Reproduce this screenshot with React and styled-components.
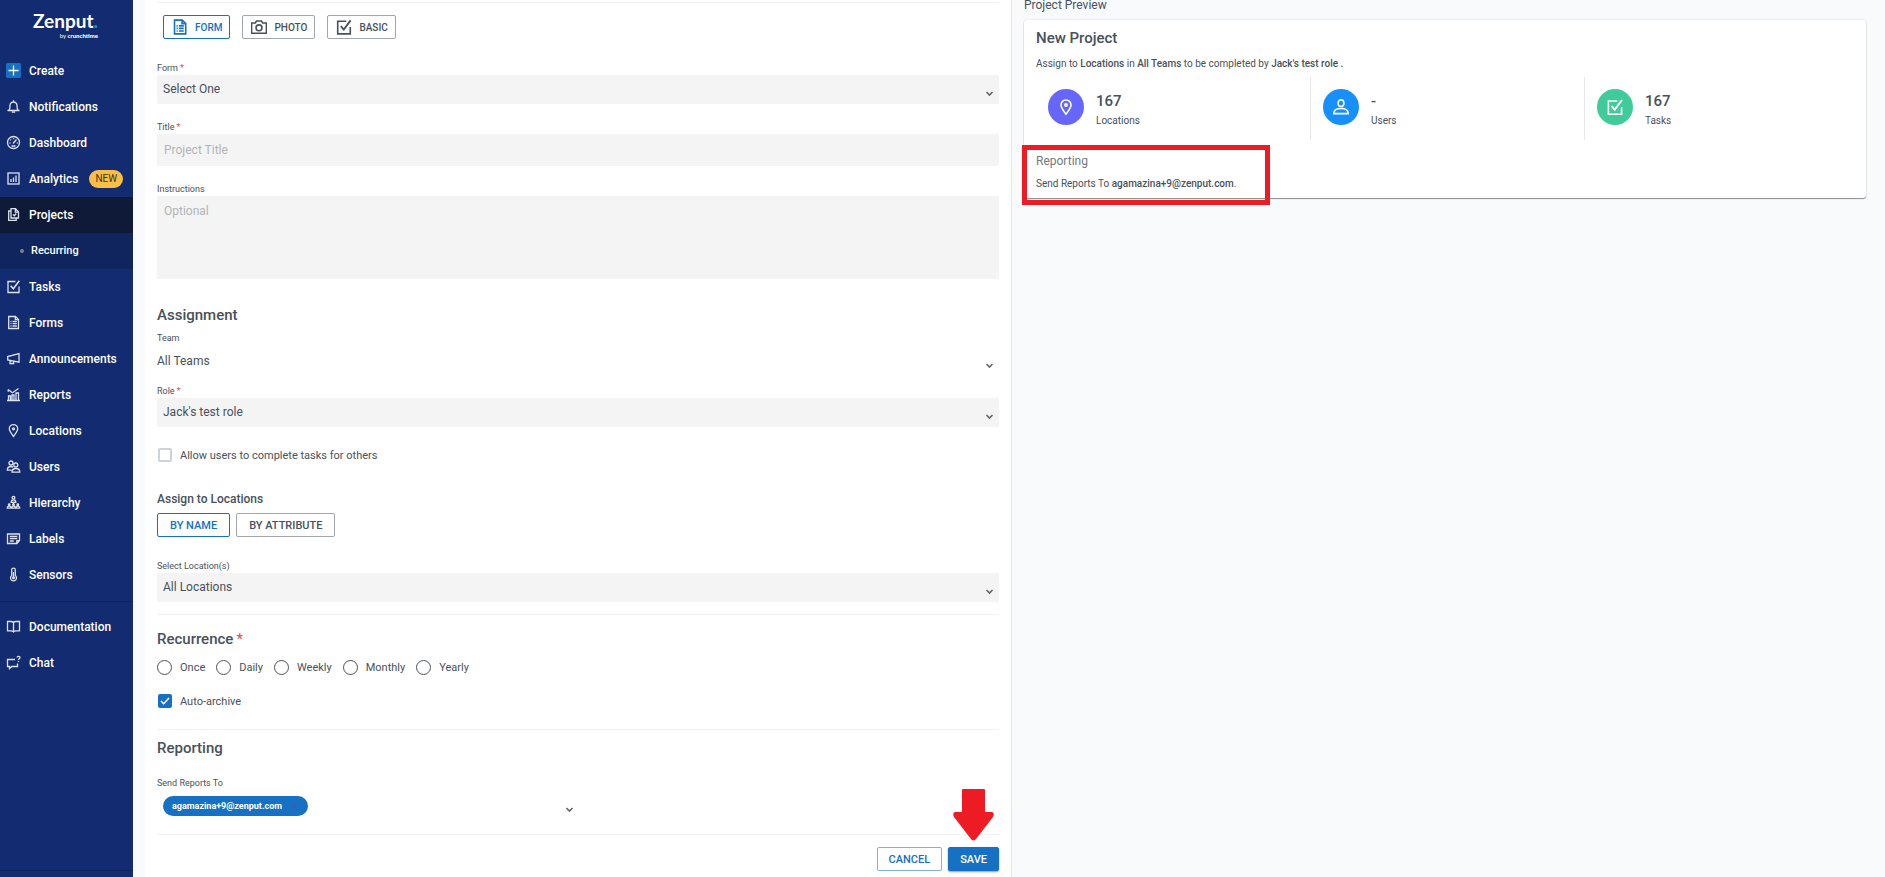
import styled, { createGlobalStyle } from "styled-components";

const GlobalStyle = createGlobalStyle`
  * {
    box-sizing: border-box;
  }
  body {
    margin: 0;
    background: #f9fafc;
    color: #47515c;
    font-family: Roboto, "Liberation Sans", sans-serif;
    font-size: 12px;
  }
  button, input, select, textarea {
    font-family: inherit;
    color: inherit;
  }
`;

const Layout = styled.div`
  display: flex;
  min-height: 100vh;
`;

/* Sidebar */

const Sidebar = styled.nav`
  display: flex;
  flex-direction: column;
  flex: 0 0 133px;
  background: #132b70;
  color: #fff;
`;

const Logo = styled.div`
  display: flex;
  flex-direction: column;
  align-items: flex-end;
  height: 53px;
  padding: 10px 35px 0 0;
`;

const LogoName = styled.span`
  font-family: Lato, sans-serif;
  font-size: 19px;
  font-weight: 700;
  line-height: 22px;

  i {
    color: #1f8fd6;
    font-style: normal;
  }
`;

const LogoTag = styled.span`
  font-family: Lato, sans-serif;
  font-size: 6px;
  line-height: 8px;

  b {
    font-weight: 900;
  }
`;

const NavLink = styled.a`
  display: flex;
  align-items: center;
  gap: 8px;
  height: 36px;
  padding: 0 0 1px 6px;
  background: ${({ $active }) => ($active ? "#0f1a38" : "transparent")};
  color: #fff;
  font-weight: 500;
  text-decoration: none;
`;

const SubLink = styled.a`
  display: flex;
  align-items: center;
  gap: 7px;
  height: 36px;
  padding: 0 0 1px 20px;
  background: #10245e;
  color: #fff;
  font-size: 11px;
  font-weight: 500;
  text-decoration: none;

  &::before {
    content: "";
    width: 4px;
    height: 4px;
    border-radius: 50%;
    background: #7d8088;
  }
`;

const NavIcon = styled.svg`
  flex: none;
  width: 15px;
  height: 15px;
  fill: none;
  stroke: #dde2ee;
  stroke-width: 1.3;
`;

const NewBadge = styled.span`
  margin-left: 3px;
  padding: 0 6px;
  border-radius: 9px;
  background: #f9be46;
  color: #3a3524;
  font-size: 10px;
  font-weight: 400;
  line-height: 18px;
`;

const NavDivider = styled.div`
  height: 1px;
  margin: 8px 0 7px;
  background: #10235a;
`;

const NavFooter = styled.div`
  height: 7px;
  margin-top: auto;
  border-top: 1px solid #10235a;
`;

/* Content */

const Content = styled.main`
  display: grid;
  grid-template-columns: 1fr 1fr;
  flex: 1;
  padding: 0 6px 0 12px;
`;

const FormPanel = styled.form`
  padding: 2px 12px 6px;
  border-right: 1px solid #e4e7eb;
  background: #fff;
`;

const Divider = styled.hr`
  height: 1px;
  margin: ${({ $top = 12 }) => $top}px 0 0;
  border: 0;
  background: #f1f2f3;
`;

const Row = styled.div`
  display: flex;
  align-items: center;
  gap: ${({ $gap = 12 }) => $gap}px;
  margin-top: ${({ $top = 12 }) => $top}px;
  padding-left: ${({ $indent = 0 }) => $indent}px;
`;

const OutlineButton = styled.button`
  display: flex;
  align-items: center;
  height: 24px;
  padding: 0 12px;
  border: 1px solid ${({ $selected }) => ($selected ? "#1670c4" : "#a1a6ae")};
  border-radius: 2px;
  background: #fff;
  color: ${({ $selected }) => ($selected ? "#1670c4" : "#47515c")};
  font-size: 11px;
  font-weight: 500;
`;

const TypeButton = styled(OutlineButton)`
  gap: 7px;
  padding: 0 7px 0 8px;
  font-size: 10px;
`;

const CancelButton = styled(OutlineButton)`
  padding: 0 11px;
  border-color: #7db1e0;
  color: #1670c4;
`;

const SaveButton = styled(OutlineButton)`
  padding: 0 11px;
  border-color: #1670c4;
  background: #1670c4;
  box-shadow: 0 1px 2px rgba(0, 0, 0, 0.4);
  color: #fff;
`;

const TypeIcon = styled.svg`
  width: 16px;
  height: 16px;
  fill: none;
  stroke: currentColor;
  stroke-width: 1.4;
`;

const Field = styled.div`
  display: flex;
  flex-direction: column;
  margin-top: ${({ $top = 17 }) => $top}px;
`;

const Label = styled.label`
  font-size: 9px;
  line-height: 13px;
`;

const Required = styled.span`
  margin-left: ${({ $gap = 2 }) => $gap}px;
  color: #f0454f;
  font-weight: 400;
`;

const SelectWrap = styled.div`
  position: relative;
  margin-top: ${({ $plain }) => ($plain ? 2 : 0)}px;
`;

const Select = styled.select`
  display: block;
  width: 100%;
  height: 29px;
  padding: 0 24px 1px ${({ $plain }) => ($plain ? 0 : 6)}px;
  border: 0;
  border-radius: 2px;
  background: ${({ $plain }) => ($plain ? "transparent" : "#f4f4f4")};
  font-size: 12px;
  appearance: none;
`;

const SelectArrow = styled.svg`
  position: absolute;
  right: 5px;
  bottom: 6px;
  width: 9px;
  height: 9px;
  fill: none;
  stroke: #62666b;
  stroke-width: 1.6;
  pointer-events: none;
`;

const TextInput = styled.input`
  height: 32px;
  padding: 0 7px;
  border: 0;
  border-radius: 2px;
  background: #f4f4f4;
  font-size: 12px;

  &::placeholder {
    color: #b1b4b8;
  }
`;

const TextArea = styled.textarea`
  height: 83px;
  padding: 8px 7px;
  border: 0;
  border-radius: 2px;
  background: #f4f4f4;
  font-size: 12px;
  resize: none;

  &::placeholder {
    color: #b1b4b8;
  }
`;

const Heading = styled.h2`
  margin: ${({ $top }) => $top}px 0 0;
  font-size: 15px;
  font-weight: 500;
  line-height: 20px;
`;

const SubHeading = styled.h3`
  margin: 28px 0 0;
  font-size: 12px;
  font-weight: 500;
  line-height: 16px;
`;

const Choice = styled.label`
  display: flex;
  align-items: center;
  gap: 8px;
  height: 16px;
  font-size: 11px;
`;

const Checkbox = styled.input`
  width: 14px;
  height: 14px;
  margin: 0 0 0 1px;
  border: 2px solid #cfd3d8;
  border-radius: 2px;
  background: #fff;
  appearance: none;

  &:checked {
    border-color: #1670c4;
    background: #1670c4;
  }
`;

const Tick = styled.svg`
  position: absolute;
  top: 2px;
  left: 3px;
  width: 10px;
  height: 10px;
  fill: none;
  stroke: #fff;
  stroke-width: 1.5;
  pointer-events: none;
`;

const CheckBoxWrap = styled.span`
  position: relative;
  display: flex;
`;

const Radio = styled.input`
  width: 15px;
  height: 15px;
  margin: 0;
  border: 1px solid #4f5357;
  border-radius: 50%;
  background: #fff;
  appearance: none;

  &:checked {
    border: 4px solid #1670c4;
  }
`;

const Recipients = styled.div`
  display: flex;
  align-items: center;
  justify-content: space-between;
  width: 50%;
  height: 32px;
  padding: 0 4px 0 6px;
`;

const Chip = styled.span`
  display: flex;
  align-items: center;
  height: 20px;
  padding: 0 9px;
  border-radius: 10px;
  background: #1670c4;
  color: #fff;
  font-size: 9px;
  font-weight: 700;
`;

const IconButton = styled.button`
  display: flex;
  padding: 0;
  border: 0;
  background: transparent;
  color: ${({ $color = "#62666b" }) => $color};
  margin: ${({ $margin = 0 }) => $margin};

  svg {
    width: 9px;
    height: 9px;
    fill: none;
    stroke: currentColor;
    stroke-width: ${({ $thin }) => ($thin ? 1 : 1.6)};
  }
`;

const Actions = styled.div`
  display: flex;
  justify-content: flex-end;
  gap: 6px;
  margin-top: 12px;
`;

const SaveWrap = styled.div`
  position: relative;
`;

const Pointer = styled.svg`
  position: absolute;
  bottom: 30px;
  left: 5px;
  width: 41px;
  height: 52px;
  fill: #ed1c24;
`;

/* Preview */

const Preview = styled.section`
  padding: 0 13px 0 12px;
`;

const PreviewTitle = styled.h2`
  margin: 0 0 10px;
  font-size: 12px;
  font-weight: 400;
  line-height: 10px;
`;

const Card = styled.article`
  padding: 8px 8px 7px 12px;
  border-radius: 3px;
  background: #fff;
  box-shadow: 0 1px 1px rgba(0, 0, 0, 0.42), 0 0 2px rgba(0, 0, 0, 0.15);
`;

const CardTitle = styled.h3`
  margin: 0;
  font-size: 15px;
  font-weight: 500;
  line-height: 20px;
`;

const Summary = styled.p`
  margin: ${({ $top }) => $top}px 0 0;
  font-size: 10px;
  line-height: 14px;

  b {
    font-weight: 500;
  }
`;

const Stats = styled.div`
  display: grid;
  grid-template-columns: repeat(3, 1fr);
  margin-top: 6px;
`;

const Stat = styled.div`
  display: flex;
  align-items: flex-start;
  gap: 12px;
  height: 63px;
  padding: 12px 12px 0;

  & + & {
    border-left: 1px solid #e6e7e9;
  }
`;

const StatCircle = styled.span`
  display: flex;
  align-items: center;
  justify-content: center;
  width: 36px;
  height: 36px;
  border-radius: 50%;
  background: ${({ $color }) => $color};

  svg {
    width: 18px;
    height: 18px;
    fill: none;
    stroke: #fff;
    stroke-width: 1.3;
  }
`;

const StatText = styled.div`
  display: flex;
  flex-direction: column;
  padding-top: 2px;
  font-size: 10px;
  line-height: 20px;

  strong {
    font-size: 15px;
    font-weight: 500;
  }
`;

const ReportNote = styled.div`
  position: relative;
  width: fit-content;
  margin-top: 13px;
`;

const NoteTitle = styled.h4`
  margin: 0;
  color: #75787c;
  font-size: 12px;
  font-weight: 400;
  line-height: 16px;
`;

const Highlight = styled.div`
  position: absolute;
  inset: -8px -34px -14px -14px;
  border: 5px solid #ed1c24;
  pointer-events: none;
`;

const icons = {
  create: (
    <>
      <rect width="15" height="15" rx="1.5" fill="#1670c4" stroke="none" />
      <path d="M7.5 2.5v10M2.5 7.5h10" stroke="#fff" />
    </>
  ),
  bell: (
    <path d="M1.5 11.500h12M3 11.300c1-1 1-2.300 1-4.800a3.500 3.500 0 0 1 7 0c0 2.500 0 3.800 1 4.800M5.800 13.200h3.400M7.500 3V1.300" />
  ),
  gauge: (
    <>
      <circle cx="7.5" cy="7.5" r="6" />
      <path d="M7 8.500l3.500-4M3.500 8h1M10.800 8h1M7.500 3.200v1M4.300 4.600l.8.8M5.500 11h4" />
    </>
  ),
  analytics: (
    <>
      <rect x="2" y="2" width="11" height="11" />
      <path d="M5 11V8M7.500 11V6.500M10 11V4.500" />
    </>
  ),
  projects: (
    <>
      <path d="M5 1.700h4.500L12.500 5v6H5zM9.300 2v3.200h3M4.800 4H2.700v9.300h7.500V11.500" />
      <path d="M7 7.500l1.300 1.300 2-2.300" />
    </>
  ),
  check: (
    <>
      <path d="M9.500 2.500H2v11h11V7.500" />
      <path d="M4.700 6.700l2.600 3 6-8" strokeWidth="1.6" />
    </>
  ),
  form: (
    <>
      <path d="M2.700 1.500h6.800l3 3v9H2.700zM9.300 1.700v3h3" />
      <path d="M4.500 6.500h1M6.500 6.500h4.300M4.500 8.700h1M6.500 8.700h4.300M4.500 11h1M6.500 11h4.300" />
    </>
  ),
  announce: (
    <path d="M1.700 5.500v3.400l11.300 2.300V2.700zM4 9.500v3h3.700v-2" />
  ),
  reports: (
    <path d="M1 13.500h13M2.500 13.300V9h2v4.300M6 13.300V8h2v5.300M10 13.300V6h2.500v7.300M2 2.500l4.500 3.200L12.500 1.500M2.200 4.700V2.500" />
  ),
  pin: (
    <>
      <path d="M7.500 13.500C5 10 3.300 8 3.300 5.800a4.200 4.200 0 0 1 8.400 0c0 2.200-1.700 4.200-4.200 7.700z" />
      <circle cx="7.500" cy="5.800" r="1" />
    </>
  ),
  users: (
    <>
      <circle cx="5" cy="4" r="2" />
      <circle cx="9.800" cy="6" r="2" />
      <path d="M6 13.200c0-2.500 1.500-3.700 3.900-3.700s3.900 1.200 3.900 3.700zM5.500 11.200H1.300c0-2.200 1.200-3.700 3.700-3.700 1 0 1.600.2 2.200.6" />
    </>
  ),
  hierarchy: (
    <>
      <circle cx="7.500" cy="2.700" r="1.400" />
      <path d="M5.200 7.300c0-1.700.8-2.500 2.300-2.500s2.300.8 2.300 2.500zM7.500 7.500v2" />
      <circle cx="3.200" cy="9.800" r="0.800" />
      <circle cx="7.500" cy="9.800" r="0.800" />
      <circle cx="11.800" cy="9.800" r="0.800" />
      <path d="M1.300 13.200c0-1.400.6-2 1.900-2s1.900.6 1.900 2zM5.600 13.200c0-1.400.6-2 1.900-2s1.900.6 1.900 2zM9.900 13.200c0-1.400.6-2 1.900-2s1.900.6 1.900 2z" />
    </>
  ),
  labels: (
    <path d="M1.500 3h12v6.500l-2.500 3H1.500zM3.800 5.500h7.500M3.800 7.700h7.500M3.800 10h4M10.800 12.300V9.700h2.500" />
  ),
  sensors: (
    <>
      <path d="M5.700 8.500V3a1.800 1.800 0 0 1 3.600 0v5.500a3 3 0 1 1-3.600 0z" />
      <path d="M7.500 5v5.500" />
      <circle cx="7.500" cy="10.800" r="0.900" />
    </>
  ),
  book: (
    <path d="M7.500 3.500C6.800 2.700 6 2.500 5 2.500H1.500v9.300H5c1.200 0 2 .2 2.500 1 .5-.8 1.300-1 2.500-1h3.500V2.500H10c-1 0-1.800.2-2.500 1zM7.500 3.500v9" />
  ),
  chat: (
    <>
      <path d="M9 4.500H1.500v7h2v2l2.300-2h5.700V8.500" />
      <path d="M11 2.500c.2-1.500 3-1.400 3 .2 0 1.200-1.500 1-1.500 2.300M12.500 6v1" />
    </>
  ),
  camera: (
    <>
      <path d="M1 4h3.300l1-1.800h4.400l1 1.800H14v9H1z" />
      <circle cx="7.500" cy="8.200" r="2.600" />
    </>
  ),
  person: (
    <>
      <ellipse cx="7.500" cy="4.300" rx="2.400" ry="2.800" />
      <path d="M1.500 13c0-3 2-4.300 6-4.300s6 1.300 6 4.300z" />
    </>
  ),
};

const Chevron = () => <path d="M1.500 3l3 3 3-3" />;

const navItems = [
  { label: "Create", icon: "create" },
  { label: "Notifications", icon: "bell" },
  { label: "Dashboard", icon: "gauge" },
  { label: "Analytics", icon: "analytics", badge: "NEW" },
  { label: "Projects", icon: "projects", active: true, child: "Recurring" },
  { label: "Tasks", icon: "check" },
  { label: "Forms", icon: "form" },
  { label: "Announcements", icon: "announce" },
  { label: "Reports", icon: "reports" },
  { label: "Locations", icon: "pin" },
  { label: "Users", icon: "users" },
  { label: "Hierarchy", icon: "hierarchy" },
  { label: "Labels", icon: "labels" },
  { label: "Sensors", icon: "sensors" },
];

const helpItems = [
  { label: "Documentation", icon: "book" },
  { label: "Chat", icon: "chat" },
];

const projectTypes = [
  { label: "FORM", icon: "form", selected: true },
  { label: "PHOTO", icon: "camera" },
  { label: "BASIC", icon: "check" },
];

const stats = [
  { value: "167", label: "Locations", icon: "pin", color: "#6667f9" },
  { value: "-", label: "Users", icon: "person", color: "#1890fb" },
  { value: "167", label: "Tasks", icon: "check", color: "#40cb9b" },
];

function NavItem({ label, icon, badge, active, child }) {
  return (
    <>
      <NavLink href="#" $active={active}>
        <NavIcon viewBox="0 0 15 15">{icons[icon]}</NavIcon>
        {label}
        {badge && <NewBadge>{badge}</NewBadge>}
      </NavLink>
      {child && <SubLink href="#">{child}</SubLink>}
    </>
  );
}

function SelectField({ id, label, value, required, plain, top }) {
  return (
    <Field $top={top}>
      <Label htmlFor={id}>
        {label}
        {required && <Required>*</Required>}
      </Label>
      <SelectWrap $plain={plain}>
        <Select id={id} $plain={plain}>
          <option>{value}</option>
        </Select>
        <SelectArrow viewBox="0 0 9 9">
          <Chevron />
        </SelectArrow>
      </SelectWrap>
    </Field>
  );
}

function ProjectForm() {
  return (
    <FormPanel onSubmit={(e) => e.preventDefault()}>
      <Divider $top={0} />
      <Row $indent={6}>
        {projectTypes.map(({ label, icon, selected }) => (
          <TypeButton key={label} type="button" $selected={selected}>
            <TypeIcon viewBox="0.5 0.5 14 14">{icons[icon]}</TypeIcon>
            {label}
          </TypeButton>
        ))}
      </Row>

      <SelectField id="form" label="Form" value="Select One" required top={23} />
      <Field>
        <Label htmlFor="title">
          Title<Required>*</Required>
        </Label>
        <TextInput id="title" placeholder="Project Title" />
      </Field>
      <Field>
        <Label htmlFor="instructions">Instructions</Label>
        <TextArea id="instructions" placeholder="Optional" />
      </Field>

      <Heading $top={26}>Assignment</Heading>
      <SelectField id="team" label="Team" value="All Teams" plain top={7} />
      <SelectField id="role" label="Role" value="Jack's test role" required top={9} />
      <Row $top={20}>
        <Choice>
          <Checkbox type="checkbox" />
          Allow users to complete tasks for others
        </Choice>
      </Row>

      <SubHeading>Assign to Locations</SubHeading>
      <Row $top={6} $gap={6}>
        <OutlineButton type="button" $selected>
          BY NAME
        </OutlineButton>
        <OutlineButton type="button">BY ATTRIBUTE</OutlineButton>
      </Row>
      <SelectField id="locations" label="Select Location(s)" value="All Locations" top={23} />

      <Divider />
      <Heading $top={14} id="recurrence">
        Recurrence<Required $gap={3}>*</Required>
      </Heading>
      <Row $top={10} $gap={11} role="radiogroup" aria-labelledby="recurrence">
        {["Once", "Daily", "Weekly", "Monthly", "Yearly"].map((name) => (
          <Choice key={name}>
            <Radio type="radio" name="recurrence" value={name} />
            {name}
          </Choice>
        ))}
      </Row>
      <Row $top={18}>
        <Choice>
          <CheckBoxWrap>
            <Checkbox type="checkbox" defaultChecked />
            <Tick viewBox="0 0 10 10">
              <path d="M1 5l2.700 2.700L9 2" />
            </Tick>
          </CheckBoxWrap>
          Auto-archive
        </Choice>
      </Row>

      <Divider $top={20} />
      <Heading $top={8}>Reporting</Heading>
      <Field $top={19}>
        <Label as="span">Send Reports To</Label>
        <Recipients>
          <Chip>
            agamazina+9@zenput.com
            <IconButton type="button" aria-label="Remove" $color="#2f62a0" $margin="0 0 0 8px" $thin>
              <svg viewBox="0 0 9 9">
                <path d="M2 2l5 5M7 2l-5 5" />
              </svg>
            </IconButton>
          </Chip>
          <IconButton type="button" aria-label="Choose recipients" $margin="6px 0 0">
            <svg viewBox="0 0 9 9">
              <Chevron />
            </svg>
          </IconButton>
        </Recipients>
      </Field>

      <Divider />
      <Actions>
        <CancelButton type="button">CANCEL</CancelButton>
        <SaveWrap>
          <SaveButton type="submit">SAVE</SaveButton>
          <Pointer viewBox="0 0 41 52">
            <path d="M10 0h21q1 0 1 1v22h7q3 1 1 5L23 50q-2.500 3-5 0L1 28q-2-4 1-5h7V1q0-1 1-1z" />
          </Pointer>
        </SaveWrap>
      </Actions>
    </FormPanel>
  );
}

function ProjectPreview() {
  return (
    <Preview>
      <PreviewTitle>Project Preview</PreviewTitle>
      <Card>
        <CardTitle>New Project</CardTitle>
        <Summary $top={9}>
          Assign to <b>Locations</b> in <b>All Teams</b> to be completed by{" "}
          <b>Jack's test role .</b>
        </Summary>
        <Stats>
          {stats.map(({ value, label, icon, color }) => (
            <Stat key={label}>
              <StatCircle $color={color}>
                <svg viewBox="0 0 15 15">{icons[icon]}</svg>
              </StatCircle>
              <StatText>
                <strong>{value}</strong>
                {label}
              </StatText>
            </Stat>
          ))}
        </Stats>
        <ReportNote>
          <NoteTitle>Reporting</NoteTitle>
          <Summary $top={8}>
            Send Reports To <b>agamazina+9@zenput.com</b>.
          </Summary>
          <Highlight />
        </ReportNote>
      </Card>
    </Preview>
  );
}

function App() {
  return (
    <>
      <GlobalStyle />
      <Layout>
        <Sidebar>
          <Logo>
            <LogoName>
              Zenput<i>.</i>
            </LogoName>
            <LogoTag>
              by <b>crunchtime</b>
            </LogoTag>
          </Logo>
          {navItems.map((item) => (
            <NavItem key={item.label} {...item} />
          ))}
          <NavDivider />
          {helpItems.map((item) => (
            <NavItem key={item.label} {...item} />
          ))}
          <NavFooter />
        </Sidebar>
        <Content>
          <ProjectForm />
          <ProjectPreview />
        </Content>
      </Layout>
    </>
  );
}

export default App;
